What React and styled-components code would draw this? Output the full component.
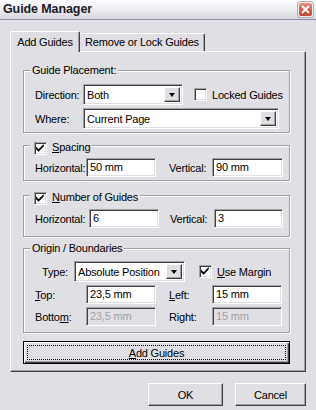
import styled, { createGlobalStyle } from "styled-components";

const FACE = "#e0dfe3";
const FONT = `"Liberation Sans", Arial, sans-serif`;

const GlobalStyle = createGlobalStyle`
  html, body {
    margin: 0;
    padding: 0;
    background: ${FACE};
  }
  body {
    font-family: ${FONT};
    font-size: 11px;
    letter-spacing: -0.2px;
    color: #000;
  }
  * {
    box-sizing: border-box;
  }
`;

const Window = styled.div`
  width: 316px;
  height: 410px;
  display: flex;
  flex-direction: column;
  background: ${FACE};
  overflow: hidden;
`;

const TitleBar = styled.div`
  height: 20px;
  display: flex;
  align-items: center;
  justify-content: space-between;
  padding: 0 3px 1px 3px;
  background: linear-gradient(#fdfdff 0%, #eeeef3 45%, #d6d6de 100%);
  border-bottom: 1px solid #8c8ca4;
`;

const Title = styled.span`
  font-weight: bold;
  font-size: 12.5px;
  color: #1c1c24;
  letter-spacing: -0.1px;
`;

const CloseButton = styled.button`
  width: 15px;
  height: 15px;
  padding: 0;
  margin-top: 1px;
  display: flex;
  align-items: center;
  justify-content: center;
  border: 1px solid #f4f0f0;
  border-radius: 3px;
  background: linear-gradient(#ee8e84, #d4564a 60%, #c44438);
  box-shadow: 0 0 0 1px #b8a8b0;
`;

const Body = styled.div`
  padding: 11px 10px 0 10px;
  display: flex;
  flex-direction: column;
`;

const TabRow = styled.div`
  height: 21px;
  display: flex;
  align-items: flex-end;
  margin-bottom: -1px;
  position: relative;
  z-index: 1;
`;

const Tab = styled.div`
  height: ${(p) => (p.$active ? "21px" : "18px")};
  width: ${(p) => p.$width}px;
  margin-bottom: ${(p) => (p.$active ? "0" : "1px")};
  display: flex;
  align-items: flex-start;
  justify-content: center;
  padding-top: ${(p) => (p.$active ? "4px" : "2px")};
  white-space: nowrap;
  background: ${FACE};
  border-top: 1px solid #fff;
  border-left: ${(p) => (p.$active ? "1px solid #fff" : "none")};
  border-right: 1px solid #404040;
  box-shadow: inset -1px 0 0 #a0a0a4;
  border-radius: 2px 2px 0 0;
`;

const Panel = styled.div`
  height: 321px;
  padding: 11px 0 0 12px;
  display: flex;
  flex-direction: column;
  border-top: 1px solid #fff;
  border-left: 1px solid #fff;
  border-right: 1px solid #404040;
  border-bottom: 1px solid #404040;
  box-shadow: inset -1px -1px 0 #a0a0a4;
`;

const Group = styled.fieldset`
  width: 267px;
  margin: ${(p) => p.$top || 0}px 0 0 0;
  padding: ${(p) => p.$pad || "7px 0 3px 11px"};
  min-width: 0;
  border: 1px solid #a0a0a4;
  box-shadow: inset 1px 1px 0 #fff, 1px 1px 0 #fff;
  display: flex;
  flex-direction: column;
  gap: 3px;
`;

const Legend = styled.legend`
  margin-left: -5px;
  padding: 0 2px 0 ${(p) => p.$padLeft || 2}px;
  height: 14px;
  line-height: 14px;
  display: flex;
  align-items: flex-start;
  gap: 5px;
  background: ${FACE};
`;

const LegendText = styled.span`
  margin-top: ${(p) => p.$shift || 0}px;
  line-height: 14px;
`;

const Row = styled.div`
  display: flex;
  align-items: center;
  height: ${(p) => p.$h || 19}px;
`;

const Label = styled.span`
  width: ${(p) => p.$w}px;
  margin-left: ${(p) => p.$gap || 0}px;
  padding-left: ${(p) => p.$indent || 0}px;
  flex-shrink: 0;
  white-space: nowrap;
`;

const sunken = `
  border: 1px solid;
  border-color: #a0a0a4 #fff #fff #a0a0a4;
  box-shadow: inset 1px 1px 0 #404040, inset -1px -1px 0 ${FACE};
`;

const Field = styled.div`
  width: ${(p) => p.$w}px;
  height: 19px;
  flex-shrink: 0;
  ${sunken}
  background: ${(p) => (p.$disabled ? FACE : "#fff")};
  color: ${(p) => (p.$disabled ? "#a0a0a4" : "#000")};
  padding: 0 0 0 3px;
  line-height: 17px;
  white-space: nowrap;
  overflow: hidden;
`;

const Combo = styled.div`
  width: ${(p) => p.$w}px;
  height: 21px;
  flex-shrink: 0;
  ${sunken}
  background: #fff;
  display: flex;
  align-items: stretch;
  padding: 2px 2px 2px 3px;
`;

const ComboText = styled.span`
  flex: 1;
  line-height: 16px;
  white-space: nowrap;
  overflow: hidden;
`;

const ComboArrow = styled.span`
  width: 16px;
  display: flex;
  align-items: center;
  justify-content: center;
  background: ${FACE};
  border: 1px solid;
  border-color: #fff #404040 #404040 #fff;
  box-shadow: inset -1px -1px 0 #a0a0a4;
  &::after {
    content: "";
    border-left: 3.5px solid transparent;
    border-right: 3.5px solid transparent;
    border-top: 4px solid #000;
    margin-top: 1px;
  }
`;

const CheckLabel = styled.span`
  display: flex;
  align-items: center;
  gap: 5px;
  margin-left: ${(p) => p.$gap || 0}px;
  white-space: nowrap;
`;

const Box = styled.span`
  width: 13px;
  height: 13px;
  flex-shrink: 0;
  margin-top: ${(p) => p.$shift || 0}px;
  ${sunken}
  background: #fff;
  display: flex;
  align-items: center;
  justify-content: center;
`;

const Button = styled.button`
  width: ${(p) => p.$w}px;
  height: 23px;
  margin-top: ${(p) => p.$top || 0}px;
  padding: 0;
  font-family: ${FONT};
  font-size: 11px;
  letter-spacing: -0.2px;
  color: #000;
  background: ${FACE};
  border: 1px solid;
  border-color: ${(p) => (p.$default ? "#000" : "#fff #404040 #404040 #fff")};
  box-shadow: ${(p) =>
    p.$default
      ? "inset 1px 1px 0 #fff, inset -1px -1px 0 #404040, inset -2px -2px 0 #a0a0a4"
      : "inset -1px -1px 0 #a0a0a4"};
  display: flex;
  align-items: stretch;
  justify-content: stretch;
`;

const FocusRing = styled.span`
  flex: 1;
  margin: 3px;
  border: 1px dotted #000;
  display: flex;
  align-items: center;
  justify-content: center;
`;

const ButtonText = styled.span`
  flex: 1;
  display: flex;
  align-items: center;
  justify-content: center;
`;

const Footer = styled.div`
  display: flex;
  justify-content: flex-end;
  gap: 12px;
  margin-top: 11px;
`;

const Check = () => (
  <svg width="9" height="9" viewBox="0 0 7 7">
    <path d="M0 2 L2 4 L6 0 V2 L2 6 L0 4 Z" fill="#000" />
  </svg>
);

const CheckBox = ({ checked, shift }) => <Box $shift={shift}>{checked && <Check />}</Box>;

const App = () => {
  return (
    <Window>
      <GlobalStyle />
      <TitleBar>
        <Title>Guide Manager</Title>
        <CloseButton aria-label="Close">
          <svg width="9" height="9" viewBox="0 0 9 9">
            <path d="M1 1 L8 8 M8 1 L1 8" stroke="#fff" strokeWidth="2" />
          </svg>
        </CloseButton>
      </TitleBar>

      <Body>
        <TabRow>
          <Tab $active $width={70}>Add Guides</Tab>
          <Tab $width={125}>Remove or Lock Guides</Tab>
        </TabRow>

        <Panel>
          <Group $pad="7px 0 3px 11px">
            <Legend>Guide Placement:</Legend>
            <Row $h={21}>
              <Label $w={48}>Direction:</Label>
              <Combo $w={100}>
                <ComboText>Both</ComboText>
                <ComboArrow />
              </Combo>
              <CheckLabel $gap={11}>
                <CheckBox />
                Locked Guides
              </CheckLabel>
            </Row>
            <Row $h={21}>
              <Label $w={48}>Where:</Label>
              <Combo $w={196}>
                <ComboText>Current Page</ComboText>
                <ComboArrow />
              </Combo>
            </Row>
          </Group>

          <Group $top={5} $pad="6px 0 3px 11px">
            <Legend $padLeft={4}>
              <CheckBox checked shift={4} />
              <LegendText $shift={2}>
                <u>S</u>pacing
              </LegendText>
            </Legend>
            <Row>
              <Label $w={51}>Horizontal:</Label>
              <Field $w={70}>50 mm</Field>
              <Label $w={43} $gap={13}>Vertical:</Label>
              <Field $w={71}>90 mm</Field>
            </Row>
          </Group>

          <Group $top={7} $pad="7px 0 8px 11px">
            <Legend $padLeft={4}>
              <CheckBox checked shift={4} />
              <LegendText $shift={2}>
                <u>N</u>umber of Guides
              </LegendText>
            </Legend>
            <Row>
              <Label $w={54}>Horizontal:</Label>
              <Field $w={70}>6</Field>
              <Label $w={44} $gap={11}>Vertical:</Label>
              <Field $w={69}>3</Field>
            </Row>
          </Group>

          <Group $top={4} $pad="6px 0 6px 11px">
            <Legend>Origin / Boundaries</Legend>
            <Row $h={21}>
              <Label $w={39} $indent={7}>Type:</Label>
              <Combo $w={111}>
                <ComboText>Absolute Position</ComboText>
                <ComboArrow />
              </Combo>
              <CheckLabel $gap={14}>
                <CheckBox checked />
                <span>
                  <u>U</u>se Margin
                </span>
              </CheckLabel>
            </Row>
            <Row>
              <Label $w={51}>
                <u>T</u>op:
              </Label>
              <Field $w={70}>23,5 mm</Field>
              <Label $w={43} $gap={13}>
                <u>L</u>eft:
              </Label>
              <Field $w={70}>15 mm</Field>
            </Row>
            <Row>
              <Label $w={51}>
                Botto<u>m</u>:
              </Label>
              <Field $w={70} $disabled>23,5 mm</Field>
              <Label $w={43} $gap={13}>
                Ri<u>g</u>ht:
              </Label>
              <Field $w={70} $disabled>15 mm</Field>
            </Row>
          </Group>

          <Button $default $w={267} $top={8}>
            <FocusRing>
              <u>A</u>dd Guides
            </FocusRing>
          </Button>
        </Panel>

        <Footer>
          <Button $w={75}>
            <ButtonText>OK</ButtonText>
          </Button>
          <Button $w={71}>
            <ButtonText>Cancel</ButtonText>
          </Button>
        </Footer>
      </Body>
    </Window>
  );
};

export default App;
